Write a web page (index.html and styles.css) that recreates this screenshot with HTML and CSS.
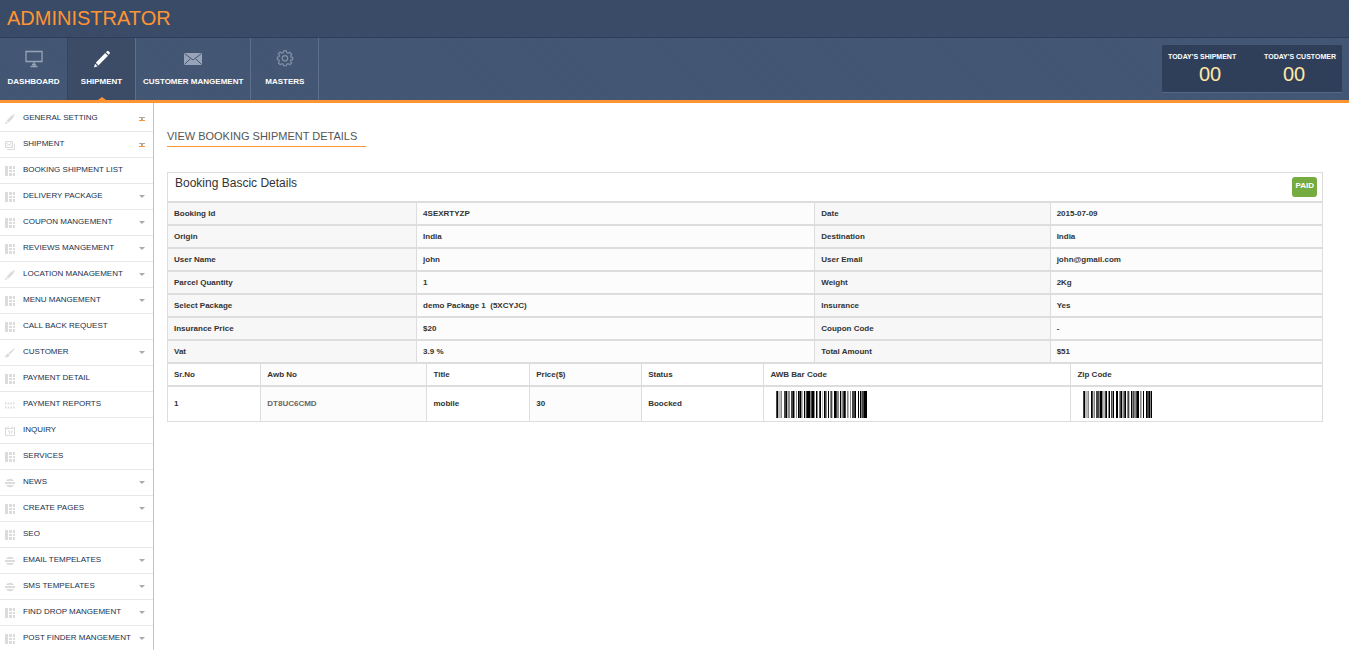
FILE: index.html
```html
<!DOCTYPE html>
<html lang="en">
<head>
<meta charset="utf-8">
<title>Administrator</title>
<link rel="stylesheet" href="styles.css">
</head>
<body>
<svg class="defs" width="0" height="0" aria-hidden="true">
  <symbol id="i-pencil" viewBox="0 0 10 10"><path d="M0 10l1-3 2 2zM1.600 6.400L7 1l2 2-5.400 5.400zM7.600.5q.8-.8 1.600 0l.4.4q.7.7-.1 1.500z"/></symbol>
  <symbol id="i-mail" viewBox="0 0 10 10"><path fill="none" stroke="currentColor" d="M.5 1.500h7v6h-7zM.5 2l3.500 3 3.500-3M.5 7l2.500-2.500M7.500 7L5 4.500M2 9.500h7.500v-6"/></symbol>
  <symbol id="i-grid" viewBox="0 0 10 10"><path d="M0 0h3v10H0zM4 0h3v3H4zM8 0h2v3H8zM4 4h3v2H4zM8 4h2v2H8zM4 7h3v3H4zM8 7h2v3H8z"/></symbol>
  <symbol id="i-brush" viewBox="0 0 10 10"><path d="M9.500 0l.5.8-5 5.400-1.400-1.400zM3 5.200l1.800 1.800Q3 10 .5 9.500L0 8z"/></symbol>
  <symbol id="i-dots" viewBox="0 0 10 10"><path fill="none" stroke="currentColor" stroke-width="2" stroke-dasharray="1.500 1.200" d="M0 3.500h10M0 7.500h10"/></symbol>
  <symbol id="i-cal" viewBox="0 0 10 10"><path fill="none" stroke="currentColor" d="M.5 1v8.500h9V1M.5 2.500h9M3 0v2M7 0v2M3 5h1.500v3M6 5h1.500L6 8"/></symbol>
  <symbol id="i-globe" viewBox="0 0 10 10"><path d="M.8 3a5 5 0 0 1 8.400 0zM0 4h10v2H0zM.8 7h8.400a5 5 0 0 1-8.400 0z"/></symbol>
</svg>

<header class="top"><h1 class="brand">ADMINISTRATOR</h1></header>
<nav class="bar">
  <a class="tab tab-first" href="#"><svg class="tab-icon" viewBox="0 0 18 18"><path fill="none" stroke="currentColor" stroke-width="1.300" d="M1 1.500h16v10H1zM9 12v4M5.500 16.500h7M7 14.500h4"/></svg>DASHBOARD</a>
  <a class="tab tab-active" href="#"><svg class="tab-icon" viewBox="0 0 18 18"><path fill="currentColor" d="M1 17.500l1-3.800 2.600 2.600zM2.800 12.800L12.200 3l2.800 2.800-9.600 9.600zM13 2.200l1-1q.8-.8 1.600 0l1 1q.8.8 0 1.600l-1 1z"/></svg>SHIPMENT</a>
  <a class="tab" href="#"><svg class="tab-icon" viewBox="0 0 18 18"><path fill="currentColor" d="M0 3h18v12H0z"/><path fill="none" stroke="#435674" d="M.5 3.500L9 10l8.500-6.500M.5 14.500l6-6M17.500 14.500l-6-6"/></svg>CUSTOMER MANGEMENT</a>
  <a class="tab" href="#"><svg class="tab-icon tab-gear" viewBox="-1 0 20 20"><path fill="none" stroke="currentColor" stroke-width="1.300" d="M7.500 1h3l.5 2 1.500.7 1.900-1.100 2 2-1.100 1.900L16 8l1.500.2v2.600L15.600 11l-.5 1.500 1.300 1.900-2 2-1.900-1.300-1.500.6-.5 1.800h-3L7 15.700l-1.500-.6-1.900 1.300-2-2 1.300-1.900L2.300 11l-1.800-.4V8l1.800-.4.6-1.500-1.300-1.900 2-2 1.900 1.300L7 3z"/><circle cx="9" cy="9.300" r="3" fill="none" stroke="currentColor" stroke-width="1.300"/></svg>MASTERS</a>
  <div class="stats">
    <div class="stat">TODAY'S SHIPMENT<strong class="count">00</strong></div>
    <div class="stat stat-end">TODAY'S CUSTOMER<strong class="count">00</strong></div>
  </div>
</nav>

<div class="layout">
  <aside class="side">
    <ul class="menu">
      <li><a class="item open" href="#"><svg class="ico"><use href="#i-pencil"/></svg>GENERAL SETTING</a></li>
      <li><a class="item open" href="#"><svg class="ico"><use href="#i-mail"/></svg>SHIPMENT</a></li>
      <li><a class="item" href="#"><svg class="ico"><use href="#i-grid"/></svg>BOOKING SHIPMENT LIST</a></li>
      <li><a class="item more" href="#"><svg class="ico"><use href="#i-grid"/></svg>DELIVERY PACKAGE</a></li>
      <li><a class="item more" href="#"><svg class="ico"><use href="#i-grid"/></svg>COUPON MANGEMENT</a></li>
      <li><a class="item more" href="#"><svg class="ico"><use href="#i-grid"/></svg>REVIEWS MANGEMENT</a></li>
      <li><a class="item more" href="#"><svg class="ico"><use href="#i-pencil"/></svg>LOCATION MANAGEMENT</a></li>
      <li><a class="item more" href="#"><svg class="ico"><use href="#i-grid"/></svg>MENU MANGEMENT</a></li>
      <li><a class="item" href="#"><svg class="ico"><use href="#i-grid"/></svg>CALL BACK REQUEST</a></li>
      <li><a class="item more" href="#"><svg class="ico"><use href="#i-brush"/></svg>CUSTOMER</a></li>
      <li><a class="item" href="#"><svg class="ico"><use href="#i-grid"/></svg>PAYMENT DETAIL</a></li>
      <li><a class="item" href="#"><svg class="ico"><use href="#i-dots"/></svg>PAYMENT REPORTS</a></li>
      <li><a class="item" href="#"><svg class="ico"><use href="#i-cal"/></svg>INQUIRY</a></li>
      <li><a class="item" href="#"><svg class="ico"><use href="#i-grid"/></svg>SERVICES</a></li>
      <li><a class="item more" href="#"><svg class="ico"><use href="#i-globe"/></svg>NEWS</a></li>
      <li><a class="item more" href="#"><svg class="ico"><use href="#i-grid"/></svg>CREATE PAGES</a></li>
      <li><a class="item" href="#"><svg class="ico"><use href="#i-grid"/></svg>SEO</a></li>
      <li><a class="item more" href="#"><svg class="ico"><use href="#i-globe"/></svg>EMAIL TEMPELATES</a></li>
      <li><a class="item more" href="#"><svg class="ico"><use href="#i-globe"/></svg>SMS TEMPELATES</a></li>
      <li><a class="item more" href="#"><svg class="ico"><use href="#i-grid"/></svg>FIND DROP MANGEMENT</a></li>
      <li><a class="item more" href="#"><svg class="ico"><use href="#i-grid"/></svg>POST FINDER MANGEMENT</a></li>
    </ul>
  </aside>

  <main class="main">
    <h2 class="title">VIEW BOOKING SHIPMENT DETAILS</h2>
    <section class="panel">
      <div class="panel-head"><h3 class="panel-title">Booking Bascic Details</h3><span class="badge">PAID</span></div>
      <table class="grid details">
        <colgroup><col class="d1"><col class="d2"><col class="d3"><col class="d4"></colgroup>
        <tbody>
          <tr><th scope="row">Booking Id</th><td>4SEXRTYZP</td><th scope="row">Date</th><td>2015-07-09</td></tr>
          <tr><th scope="row">Origin</th><td>India</td><th scope="row">Destination</th><td>India</td></tr>
          <tr><th scope="row">User Name</th><td>john</td><th scope="row">User Email</th><td>john@gmail.com</td></tr>
          <tr><th scope="row">Parcel Quantity</th><td>1</td><th scope="row">Weight</th><td>2Kg</td></tr>
          <tr><th scope="row">Select Package</th><td>demo Package 1 &nbsp;(5XCYJC)</td><th scope="row">Insurance</th><td>Yes</td></tr>
          <tr><th scope="row">Insurance Price</th><td>$20</td><th scope="row">Coupon Code</th><td>-</td></tr>
          <tr><th scope="row">Vat</th><td>3.9 %</td><th scope="row">Total Amount</th><td>$51</td></tr>
        </tbody>
      </table>
      <table class="grid parcels">
        <colgroup><col class="p1"><col class="p2"><col class="p3"><col class="p4"><col class="p5"><col class="p6"><col class="p7"></colgroup>
        <thead>
          <tr><th scope="col">Sr.No</th><th scope="col">Awb No</th><th scope="col">Title</th><th scope="col">Price($)</th><th scope="col">Status</th><th scope="col">AWB Bar Code</th><th scope="col">Zip Code</th></tr>
        </thead>
        <tbody>
          <tr><td>1</td><td class="awb">DT8UC6CMD</td><td>mobile</td><td>30</td><td>Boocked</td>
            <td><svg class="code" width="91" height="27" viewBox="0 0 91 27" role="img" aria-label="AWB bar code">
              <path stroke="#bbb" d="M2.500 0v27M3.500 0v27M4.500 0v27M11.500 0v27M26.500 0v27M46.500 0v27M56.500 0v27M72.500 0v27M29.500 0v27M65.500 0v27"/>
              <path stroke="#888" d="M5.500 0v27M13.500 0v27M18.500 0v27M20.500 0v27M25.500 0v27M34.500 0v27M41.500 0v27M50.500 0v27M61.500 0v27M62.500 0v27M66.500 0v27M71.500 0v27M74.500 0v27M85.500 0v27M12.500 0v27M38.500 0v27M54.500 0v27"/>
              <path stroke="#444" d="M0.500 0v27M8.500 0v27M9.500 0v27M15.500 0v27M16.500 0v27M23.500 0v27M30.500 0v27M35.500 0v27M43.500 0v27M49.500 0v27M55.500 0v27M60.500 0v27M67.500 0v27M69.500 0v27M76.500 0v27M77.500 0v27M78.500 0v27M86.500 0v27M87.500 0v27"/>
              <path stroke="#000" d="M1.500 0v27M10.500 0v27M17.500 0v27M22.500 0v27M24.500 0v27M28.500 0v27M31.500 0v27M32.500 0v27M33.500 0v27M36.500 0v27M37.500 0v27M40.500 0v27M44.500 0v27M48.500 0v27M52.500 0v27M58.500 0v27M59.500 0v27M64.500 0v27M68.500 0v27M79.500 0v27M82.500 0v27M84.500 0v27M88.500 0v27M89.500 0v27M90.500 0v27"/>
            </svg></td>
            <td><svg class="code" width="69" height="27" viewBox="0 0 69 27" role="img" aria-label="Zip bar code">
              <path stroke="#bbb" d="M2.500 0v27M3.500 0v27M4.500 0v27M10.500 0v27M20.500 0v27M39.500 0v27M46.500 0v27M58.500 0v27M21.500 0v27"/>
              <path stroke="#888" d="M5.500 0v27M11.500 0v27M16.500 0v27M19.500 0v27M25.500 0v27M29.500 0v27M36.500 0v27M44.500 0v27M51.500 0v27M52.500 0v27M57.500 0v27M67.500 0v27M40.500 0v27M49.500 0v27"/>
              <path stroke="#444" d="M0.500 0v27M9.500 0v27M13.500 0v27M14.500 0v27M15.500 0v27M22.500 0v27M28.500 0v27M37.500 0v27M41.500 0v27M45.500 0v27M50.500 0v27M53.500 0v27M64.500 0v27M65.500 0v27"/>
              <path stroke="#000" d="M1.500 0v27M8.500 0v27M17.500 0v27M18.500 0v27M23.500 0v27M26.500 0v27M30.500 0v27M33.500 0v27M34.500 0v27M38.500 0v27M42.500 0v27M48.500 0v27M54.500 0v27M55.500 0v27M60.500 0v27M63.500 0v27M66.500 0v27M68.500 0v27"/>
            </svg></td></tr>
        </tbody>
      </table>
    </section>
  </main>
</div>
</body>
</html>
```
FILE: styles.css
```css
* { box-sizing: border-box; }
body {
  margin: 0;
  height: 100vh;
  display: flex;
  flex-direction: column;
  overflow: hidden;
  background: #fff;
  color: #333;
  font: 8px/10px "Liberation Sans", Arial, sans-serif;
}
.defs { position: absolute; }
h1, h2, h3 { margin: 0; font-weight: normal; }
a { color: inherit; text-decoration: none; }

.top {
  flex: none;
  height: 38px;
  padding: 6px 7px;
  border-bottom: 1px solid #2c3e5b;
  background: repeating-linear-gradient(45deg, #384a66 0 1px, #3a4c68 1px 2px);
}
.brand { color: #ff9434; font-size: 20px; line-height: 24px; }

.bar {
  flex: none;
  display: flex;
  height: 65px;
  border-bottom: 3px solid #ff9434;
  background: repeating-linear-gradient(45deg, #425673 0 1px, #445875 1px 2px);
  color: #fff;
}
.tab {
  position: relative;
  display: flex;
  flex-direction: column;
  align-items: center;
  gap: 9px;
  min-width: 68px;
  padding: 12px 7px 0;
  border-right: 1px solid #5d6f8b;
  font-weight: bold;
}
.tab-first { border-right-color: #34455f; }
.tab-active { background: #3c4c67; }
.tab-active::after {
  content: "";
  position: absolute;
  bottom: 0;
  left: 50%;
  margin-left: -4px;
  border: 4px solid transparent;
  border-top: 0;
  border-bottom: 3px solid #ff9434;
}
.tab-icon { width: 18px; height: 18px; color: #97a3b6; }
.tab-gear { color: #8391a8; }
.tab-active .tab-icon { color: #fff; }
.stats {
  display: flex;
  align-self: flex-start;
  width: 180px;
  height: 48px;
  margin: 7px 7px 0 auto;
  padding: 7px 6px 0;
  background: #303f59;
  border-bottom: 1px solid #54688a;
  font-size: 7px;
  font-weight: bold;
}
.stat { flex: 1; }
.stat-end { text-align: right; }
.count {
  display: block;
  color: #ffe8a8;
  font-size: 20px;
  font-weight: normal;
  line-height: 24px;
  text-align: center;
}

.layout { flex: 1; display: flex; min-height: 0; }
.side {
  flex: none;
  width: 154px;
  padding-top: 3px;
  overflow: hidden;
  border-right: 1px solid #c4c4c4;
}
.menu { margin: 0; padding: 0; list-style: none; }
.item {
  display: flex;
  align-items: center;
  gap: 8px;
  height: 26px;
  padding: 0 8px 2px 5px;
  border-bottom: 1px solid #e8e8e8;
  color: #20304c;
}
.ico { width: 10px; height: 10px; margin-top: 2px; fill: #dcdcdc; color: #dcdcdc; }
.more::after, .open::after {
  content: "";
  margin: 2px 0 0 auto;
  border: 3px solid transparent;
  border-top-color: #aaa;
  border-bottom: 0;
}
.open::after {
  width: 6px;
  height: 4px;
  border: 0;
  background:
    linear-gradient(#ff9434, #ff9434) bottom / 6px 1px no-repeat,
    linear-gradient(#aaa, #aaa) 0 0 / 6px 1px no-repeat,
    linear-gradient(#bba794, #bba794) center 1px / 2px 2px no-repeat;
}

.main { flex: 1; min-width: 0; padding: 24px 26px 0 13px; }
.title {
  width: fit-content;
  margin-bottom: 25px;
  padding: 0 9px 1px 0;
  border-bottom: 1px solid #ff9434;
  color: #555;
  font-size: 11px;
  line-height: 18px;
}
.panel { border: 1px solid #ddd; }
.panel-head {
  display: flex;
  justify-content: space-between;
  align-items: flex-start;
  height: 28px;
  padding: 4px 5px 0 7px;
}
.panel-title { font-size: 12px; line-height: 12px; }
.badge {
  padding: 4px 3px 6px;
  border-radius: 3px;
  background: #76ab3f;
  color: #fff;
  font-weight: bold;
}
.grid {
  width: 100%;
  table-layout: fixed;
  border-collapse: separate;
  border-spacing: 0;
  font-weight: bold;
}
.grid th, .grid td {
  height: 23px;
  padding: 0 6px;
  border-top: 2px solid #ddd;
  border-left: 1px solid #ddd;
  text-align: left;
}
.grid th:first-child, .grid td:first-child { border-left: 0; }
.details th { background: #f7f7f7; }
.details td { background: #fcfcfc; }
.parcels tbody td { height: 36px; }
.parcels th:nth-child(-2n+4), .parcels td:nth-child(-2n+4) { background: #fcfcfc; }
.grid .awb { color: #666; }
.code { display: block; margin: 1px 0 0 6px; }
.d1 { width: 21.5%; }
.d2 { width: 34.5%; }
.d3 { width: 20.4%; }
.d4 { width: 23.6%; }
.p1 { width: 8%; }
.p2 { width: 14.4%; }
.p3 { width: 8.9%; }
.p4 { width: 9.7%; }
.p5 { width: 10.6%; }
.p6 { width: 26.6%; }
.p7 { width: 21.8%; }
```
